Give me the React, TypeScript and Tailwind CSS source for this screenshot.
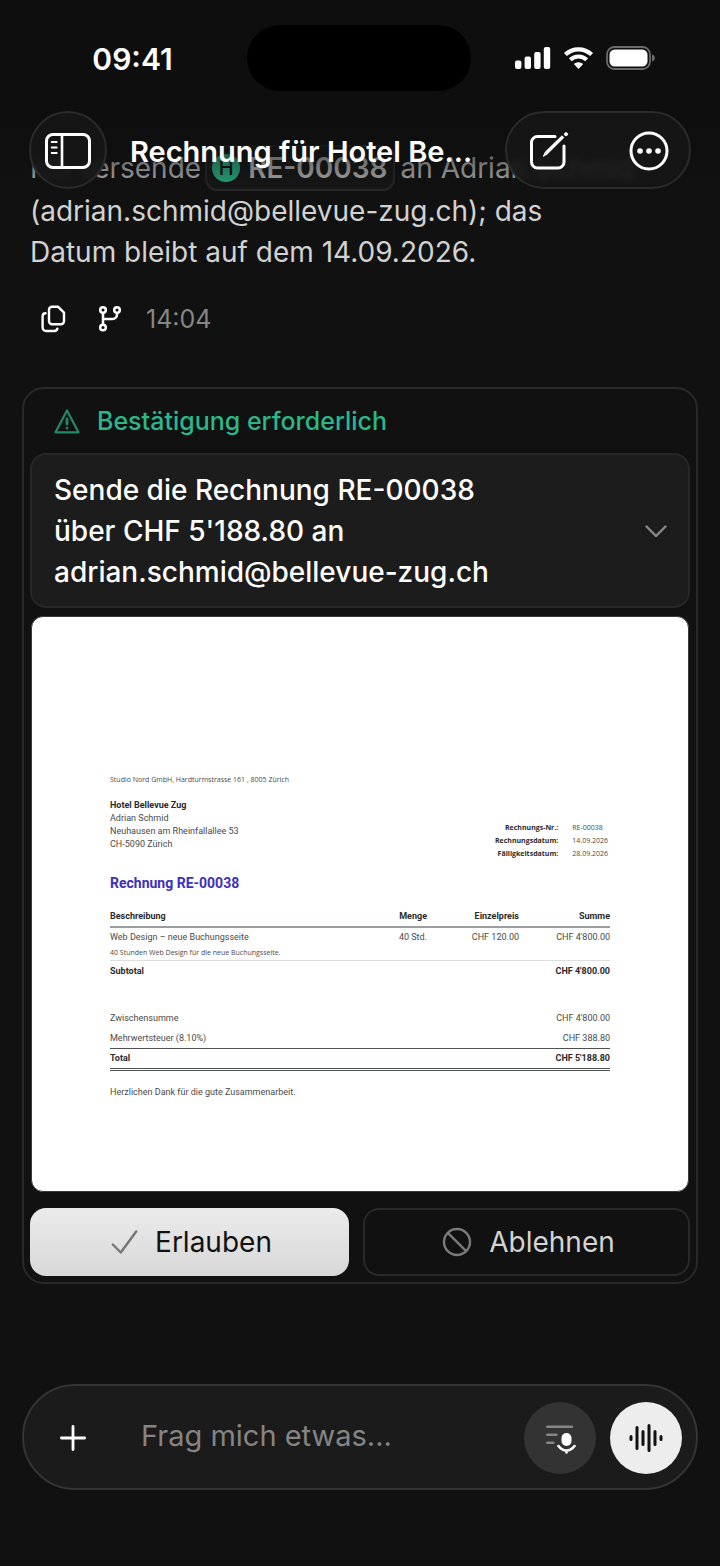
import { useState } from 'react';

const metaRows = [
  { label: 'Rechnungs-Nr.:', value: 'RE-00038' },
  { label: 'Rechnungsdatum:', value: '14.09.2026' },
  { label: 'Fälligkeitsdatum:', value: '28.09.2026' },
];

function StatusBar() {
  return (
    <div className="flex items-center pt-[25px]">
      <div className="flex-1 pt-[2px] pl-[18px] text-center text-[30px] leading-8 font-semibold text-white">09:41</div>
      <div className="h-[66px] w-56 rounded-full bg-black" />
      <div className="flex flex-1 items-center justify-center gap-3 pr-5">
        <svg width="36" height="24" viewBox="0 0 36 24" fill="#fff">
          <rect x="0" y="14.5" width="6.4" height="8.5" rx="2" />
          <rect x="9.6" y="10.5" width="6.4" height="12.5" rx="2" />
          <rect x="19.2" y="6" width="6.4" height="17" rx="2" />
          <rect x="28.8" y="1" width="6.4" height="22" rx="2" />
        </svg>
        <svg width="31" height="24" viewBox="0 0 31 24">
          <path d="M2.4 8.6a18.8 18.8 0 0 1 26.2 0" fill="none" stroke="#fff" strokeWidth="4.2" />
          <path d="M7.3 13.8a11.8 11.8 0 0 1 16.4 0" fill="none" stroke="#fff" strokeWidth="4" />
          <path d="M10.8 18.1a6.8 6.8 0 0 1 9.4 0l-4.7 5z" fill="#fff" />
        </svg>
        <svg width="50" height="24" viewBox="0 0 50 24">
          <rect x="1" y="1" width="43" height="22" rx="7.5" fill="none" stroke="#6b6b6b" strokeWidth="1.8" />
          <rect x="3.5" y="3.5" width="38" height="17" rx="5.2" fill="#fff" />
          <path d="M46 8.6c2 .5 2.8 1.8 2.8 3.4S48 14.900 46 15.400z" fill="#6b6b6b" />
        </svg>
      </div>
    </div>
  );
}

function Header() {
  return (
    <header className="absolute inset-x-0 top-0 z-10 bg-linear-to-b from-[#0e0e0e] from-60% to-[#111111]/0">
      <StatusBar />
      <div className="flex items-center px-[29px] pt-5">
        <button
          aria-label="Seitenleiste"
          className="flex size-[78px] shrink-0 items-center justify-center rounded-full border-2 border-[#2b2b2b] bg-[#161616]/90 pt-[2px] backdrop-blur-[3px]"
        >
          <svg width="46" height="36" viewBox="0 0 46 36" fill="none" stroke="#fff" strokeLinecap="round">
            <rect x="1.500" y="1.500" width="43" height="33" rx="6.500" strokeWidth="3" />
            <path d="M17 2v32" strokeWidth="2.600" />
            <path d="M6.700 9h5M6.700 14.500h5M6.700 20h5" strokeWidth="1.900" />
          </svg>
        </button>
        <h1 className="min-w-0 flex-1 truncate pt-1 pl-[23px] text-[29px] leading-10 font-semibold text-white">
          Rechnung für Hotel Be...
        </h1>
        <div className="flex h-[78px] w-[186px] shrink-0 items-center justify-between rounded-full border-2 border-[#2b2b2b] bg-[#161616]/85 pt-[2px] pr-5 pl-[22px] backdrop-blur-[3px]">
          <button aria-label="Neuer Chat" className="flex h-11 items-center">
            <svg width="40" height="40" viewBox="0 0 40 40" fill="none" stroke="#fff" strokeLinecap="round" strokeLinejoin="round">
              <path d="M26 5.500H8.500a6 6 0 0 0-6 6v19.500a6 6 0 0 0 6 6H29a6 6 0 0 0 6-6V15" strokeWidth="3" />
              <path d="M14.500 25l2-4.200L33 4.800l1.800 1.800L18.500 22.800z" fill="#fff" strokeWidth="1" />
              <circle cx="37" cy="3.200" r="1.600" fill="#fff" strokeWidth="0.800" />
            </svg>
          </button>
          <button aria-label="Mehr" className="flex h-11 items-center">
            <svg width="40" height="40" viewBox="0 0 40 40">
              <circle cx="20" cy="20" r="18" fill="none" stroke="#fff" strokeWidth="3" />
              <circle cx="11" cy="20" r="2.800" fill="#fff" />
              <circle cx="20" cy="20" r="2.800" fill="#fff" />
              <circle cx="29" cy="20" r="2.800" fill="#fff" />
            </svg>
          </button>
        </div>
      </div>
    </header>
  );
}

function Message() {
  return (
    <section className="px-[30px]">
      <p className="text-[28px] leading-[41px] text-[#d2d2d2]">
        <span className="flex items-center whitespace-nowrap text-[#a8a8a8]">
          Ich versende
          <span className="mr-[6px] ml-1 flex h-[46px] items-center gap-2 rounded-xl border-2 border-[#262626] bg-[#161616] px-[5px] font-semibold">
            <span className="flex size-7 items-center justify-center rounded-full bg-[#25a377] text-[20px] font-medium text-[#101010]">H</span>
            RE-00038
          </span>
          an Adrian Schmid
        </span>
        (adrian.schmid@bellevue-zug.ch); das
        <br />
        Datum bleibt auf dem 14.09.2026.
      </p>
      <div className="flex items-center pt-[26px] pl-[11px]">
        <button aria-label="Kopieren" className="mr-8">
          <svg width="25" height="28" viewBox="0 0 25 28" fill="none" stroke="#fff" strokeWidth="2.400" strokeLinecap="round" strokeLinejoin="round">
            <path d="M11 1.800h6.200l5.800 5.800v8.600a3 3 0 0 1-3 3h-9a3 3 0 0 1-3-3V4.800a3 3 0 0 1 3-3z" />
            <path d="M4.500 8.200a3 3 0 0 0-2.900 3v11.300a3.500 3.500 0 0 0 3.500 3.500h8.400a3 3 0 0 0 2.900-2.400" />
          </svg>
        </button>
        <button aria-label="Verzweigen" className="mr-6">
          <svg width="24" height="28" viewBox="0 0 24 28" fill="none" stroke="#fff" strokeWidth="2.500">
            <circle cx="5" cy="5" r="2.800" />
            <circle cx="19" cy="5" r="2.800" />
            <circle cx="5" cy="22.500" r="2.800" />
            <path d="M5 8v11.500M19 8v1.500a4.500 4.500 0 0 1-4.500 4.500H5" />
          </svg>
        </button>
        <time className="text-[25px] leading-10 text-[#868686]">14:04</time>
      </div>
    </section>
  );
}

function Invoice() {
  return (
    <article className="mx-px mt-2 rounded-xl border border-[#3a3a3a] bg-white px-[78px] pt-[156px] pb-[92px] font-['Roboto','Noto_Sans',sans-serif] text-[9px] leading-[13px] text-[#4a4a4a]">
      <p className="font-['Open_Sans','Noto_Sans',sans-serif] text-[7px]">Studio Nord GmbH, Hardturmstrasse 161 , 8005 Zürich</p>
      <div className="flex items-start justify-between pt-[13px]">
        <address className="not-italic">
          <strong className="text-[#2b2b2b]">Hotel Bellevue Zug</strong>
          <br />
          Adrian Schmid
          <br />
          Neuhausen am Rheinfallallee 53
          <br />
          CH-5090 Zürich
        </address>
        <table className="mt-[22px] font-['Open_Sans','Noto_Sans',sans-serif] text-[7px]">
          <tbody>
            {metaRows.map((row) => (
              <tr key={row.label}>
                <th className="pr-[14px] text-right font-bold text-[#2b2b2b]">{row.label}</th>
                <td className="pr-[2px]">{row.value}</td>
              </tr>
            ))}
          </tbody>
        </table>
      </div>
      <h2 className="pt-[13px] text-[14px] leading-5 font-bold text-[#3d2fc0]">Rechnung RE-00038</h2>
      <table className="mt-[17px] w-full">
        <thead>
          <tr className="border-b-2 border-[#9b9e9e] text-[#2b2b2b]">
            <th className="pb-[3px] text-left">Beschreibung</th>
            <th className="pb-[3px] text-right">Menge</th>
            <th className="w-[92px] pb-[3px] text-right">Einzelpreis</th>
            <th className="w-[91px] pb-[3px] text-right">Summe</th>
          </tr>
        </thead>
        <tbody>
          <tr className="border-b border-[#dcdfde] align-top">
            <td className="pt-[3px] pb-px">
              Web Design – neue Buchungsseite
              <p className="pt-[2px] font-['Open_Sans','Noto_Sans',sans-serif] text-[7px]">40 Stunden Web Design für die neue Buchungsseite.</p>
            </td>
            <td className="pt-[3px] text-right">40 Std.</td>
            <td className="pt-[3px] text-right">CHF 120.00</td>
            <td className="pt-[3px] text-right">CHF 4'800.00</td>
          </tr>
          <tr className="font-bold text-[#2b2b2b]">
            <td className="pt-1">Subtotal</td>
            <td className="pt-1 text-right" colSpan={3}>CHF 4'800.00</td>
          </tr>
        </tbody>
      </table>
      <table className="mt-8 w-full">
        <tbody>
          <tr>
            <td className="pt-[2px]">Zwischensumme</td>
            <td className="pt-[2px] text-right">CHF 4'800.00</td>
          </tr>
          <tr className="border-b border-[#4e5250]">
            <td className="pt-[7px] pb-[3px]">Mehrwertsteuer (8.10%)</td>
            <td className="pt-[7px] pb-[3px] text-right">CHF 388.80</td>
          </tr>
          <tr className="border-b-3 border-double border-[#4e5250] font-bold text-[#2b2b2b]">
            <td className="py-[3px]">Total</td>
            <td className="py-[3px] text-right">CHF 5'188.80</td>
          </tr>
        </tbody>
      </table>
      <p className="pt-[15px]">Herzlichen Dank für die gute Zusammenarbeit.</p>
    </article>
  );
}

function ConfirmCard() {
  const [open, setOpen] = useState(true);

  return (
    <section className="mx-[22px] mt-12 rounded-[22px] border-2 border-[#292929] p-[6px]">
      <div className="flex items-center gap-[17px] pt-[6px] pb-3 pl-6">
        <svg width="26" height="25" viewBox="0 0 26 25" fill="none" stroke="#228a67" strokeLinecap="round" strokeLinejoin="round">
          <path d="M13 1.500L24.500 23.300H1.500z" strokeWidth="2.200" />
          <path d="M13 10v5" strokeWidth="2.800" />
          <circle cx="13" cy="19" r="0.500" strokeWidth="2" />
        </svg>
        <h2 className="text-[25px] leading-10 font-medium text-[#2cb78a]">Bestätigung erforderlich</h2>
      </div>
      <button
        aria-expanded={open}
        onClick={() => setOpen(!open)}
        className="flex w-full items-center justify-between rounded-2xl border-2 border-[#272727] bg-[#1c1c1c] pt-[15px] pr-[21px] pb-[13px] pl-[22px] text-left"
      >
        <span className="text-[28px] leading-[41px] font-medium text-white">
          Sende die Rechnung RE-00038
          <br />
          über CHF 5'188.80 an
          <br />
          adrian.schmid@bellevue-zug.ch
        </span>
        <svg width="22" height="13" viewBox="0 0 22 13" fill="none" stroke="#8a8a8a" strokeWidth="2.400" strokeLinecap="round" strokeLinejoin="round">
          <path d="M1.500 1.500L11 11l9.500-9.500" />
        </svg>
      </button>
      {open && <Invoice />}
      <div className="grid grid-cols-[319fr_327fr] gap-[14px] pt-4">
        <button className="flex h-[68px] items-center justify-center gap-[17px] rounded-2xl bg-linear-to-b from-[#ebebeb] to-[#d8d8d8] pl-1 text-[28px] text-[#111111]">
          <svg width="27" height="24" viewBox="0 0 27 24" fill="none" stroke="#757575" strokeWidth="2.400" strokeLinecap="round" strokeLinejoin="round">
            <path d="M1.800 14.500L9.800 22.500 25.200 1.500" />
          </svg>
          Erlauben
        </button>
        <button className="flex h-[68px] items-center justify-center gap-[17px] rounded-2xl border-2 border-[#292929] pl-1 text-[28px] text-[#d4d4d4]">
          <svg width="30" height="30" viewBox="0 0 30 30" fill="none" stroke="#7a7a7a" strokeWidth="2.400">
            <circle cx="15" cy="15" r="13" />
            <path d="M5.800 5.800l18.400 18.400" />
          </svg>
          Ablehnen
        </button>
      </div>
    </section>
  );
}

function Composer() {
  return (
    <form
      onSubmit={(e) => e.preventDefault()}
      className="mx-[22px] mt-auto mb-[76px] flex h-[106px] items-center rounded-full border-2 border-[#343434] bg-[#1b1b1b] pt-[2px] pr-[14px] pl-9"
    >
      <button type="button" aria-label="Anhang hinzufügen">
        <svg width="26" height="26" viewBox="0 0 26 26" stroke="#fff" strokeWidth="2.800" strokeLinecap="round">
          <path d="M13 1.400v23.200M1.400 13h23.200" />
        </svg>
      </button>
      <input
        aria-label="Nachricht"
        placeholder="Frag mich etwas..."
        className="ml-[55px] min-w-0 flex-1 bg-transparent pb-1 text-[29px] text-white outline-none placeholder:text-[#858585]"
      />
      <button type="button" aria-label="Diktieren" className="mr-[14px] flex size-[72px] items-center justify-center rounded-full bg-[#333333]">
        <svg width="32" height="32" viewBox="0 0 32 32" fill="none" strokeLinecap="round">
          <path d="M3.200 4.800h24.600M3.200 12.800h9.200M3.200 20.800h6.200" stroke="#858585" strokeWidth="2.600" />
          <rect x="17.500" y="11" width="10" height="13" rx="5" fill="#fff" />
          <path d="M14.500 24c4.600 6 11.400 6 16 0M22.500 28.500v2" stroke="#fff" strokeWidth="2.600" />
        </svg>
      </button>
      <button type="button" aria-label="Sprachmodus" className="flex size-[72px] items-center justify-center rounded-full bg-[#ededed]">
        <svg width="34" height="30" viewBox="0 0 34 30" stroke="#111" strokeWidth="3" strokeLinecap="round">
          <path d="M2 13.500v3M8 4.500v21M14 8.500v13M20 2.500v25M26 8.500v13M32 13.500v3" />
        </svg>
      </button>
    </form>
  );
}

export default function App() {
  return (
    <div className="relative flex min-h-screen flex-col overflow-x-hidden bg-[#111111] font-['Inter','Liberation_Sans',sans-serif]">
      <Header />
      <main className="pt-[145px] pb-10">
        <Message />
        <ConfirmCard />
      </main>
      <Composer />
    </div>
  );
}
